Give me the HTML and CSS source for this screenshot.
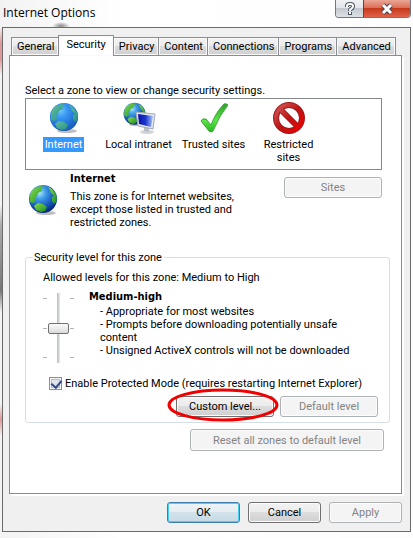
FILE: index.html
```html
<!DOCTYPE html>
<html lang="en">
  <head>
    <meta charset="UTF-8" />
    <meta name="viewport" content="width=device-width, initial-scale=1.0" />
    <title>Internet Options</title>
    <link rel="stylesheet" href="styles.css">
  </head>
  <body>
    <!-- shared globe drawing -->
    <svg class="defs" aria-hidden="true">
      <defs>
        <radialGradient id="sea" cx="38%" cy="28%" r="75%">
          <stop offset="0" stop-color="#a9e4fb" />
          <stop offset="0.3" stop-color="#3f9be8" />
          <stop offset="0.7" stop-color="#1453b8" />
          <stop offset="1" stop-color="#06256f" />
        </radialGradient>
        <linearGradient id="land" x1="0" y1="0" x2="1" y2="1">
          <stop offset="0" stop-color="#8be04c" />
          <stop offset="1" stop-color="#168a24" />
        </linearGradient>
        <linearGradient id="screen" x1="0" y1="0" x2="1" y2="0">
          <stop offset="0" stop-color="#0713a4" />
          <stop offset="0.5" stop-color="#1c35cf" />
          <stop offset="1" stop-color="#a9c3f8" />
        </linearGradient>
        <linearGradient id="tick" x1="0" y1="0" x2="0" y2="1">
          <stop offset="0" stop-color="#2d9f2a" />
          <stop offset="0.6" stop-color="#5be548" />
          <stop offset="1" stop-color="#25b51d" />
        </linearGradient>
        <linearGradient id="stop" gradientUnits="userSpaceOnUse" x1="3" y1="3" x2="29" y2="29">
          <stop offset="0" stop-color="#cf5a5a" />
          <stop offset="0.5" stop-color="#c01414" />
          <stop offset="1" stop-color="#ee0000" />
        </linearGradient>
        <symbol id="globe" viewBox="0 0 32 32">
          <ellipse cx="19" cy="29" rx="10" ry="2" fill="#000" opacity="0.25" />
          <circle cx="16" cy="15" r="14" fill="url(#sea)" />
          <path fill="url(#land)" d="M3 12C4 6 8 3 14 2L17 3L14 5L15 7L11 9L10 12L8 13L9 17L6 19L3 18Z" />
          <path fill="url(#land)" d="M21 3C26 5 29 9 30 14L29 18L27 20L25 17L25 13L27 12L24 9L23 6Z" />
          <path fill="url(#land)" d="M7 22L11 19L16 20L20 23L18 27L14 28L9 26Z" />
        </symbol>
      </defs>
    </svg>

    <!-- title bar -->
    <header class="titlebar">
      <h1>Internet Options</h1>
      <div class="window-buttons">
        <button type="button" class="help" aria-label="Help">
          <svg width="12" height="14" viewBox="0 0 12 14" fill="none">
            <path d="M3 5V4Q3 2 6 2T9 4Q9 6 7 7Q6 7 6 9M6 10V13" stroke="#4d5563" stroke-width="4" />
            <path d="M3 5V4Q3 2 6 2T9 4Q9 6 7 7Q6 7 6 9M6 10V12" stroke="#fff" stroke-width="2" />
          </svg>
        </button>
        <button type="button" class="close" aria-label="Close">
          <svg width="14" height="12" viewBox="0 0 14 12" fill="none">
            <path d="M3 2L11 10M11 2L3 10" stroke="#4b4350" stroke-width="5" />
            <path d="M3 2L11 10M11 2L3 10" stroke="#fff" stroke-width="3" />
          </svg>
        </button>
      </div>
    </header>

    <form class="dialog">
      <div class="tabs" role="tablist">
        <button type="button" role="tab">General</button>
        <button type="button" role="tab" class="active" aria-selected="true">Security</button>
        <button type="button" role="tab">Privacy</button>
        <button type="button" role="tab">Content</button>
        <button type="button" role="tab">Connections</button>
        <button type="button" role="tab">Programs</button>
        <button type="button" role="tab">Advanced</button>
      </div>

      <main class="panel">
        <p class="hint">Select a zone to view or change security settings.</p>
        <ul class="zones">
          <li class="selected">
            <svg width="32" height="32"><use href="#globe" /><circle cx="16" cy="15" r="14" fill="#3399ff" opacity="0.45" /></svg>
            <span>Internet</span>
          </li>
          <li>
            <svg width="34" height="32" viewBox="0 0 34 32">
              <use href="#globe" width="25" height="25" />
              <ellipse cx="25" cy="30" rx="7" ry="2" fill="#d2d5da" />
              <path d="M22 23L27 24L27 30L22 29Z" fill="#b9bdc4" />
              <path d="M14 10L33 12L31 27L16 24Z" fill="#e4e7ec" stroke="#a3a8b2" />
              <path d="M16 12L31 14L29 25L17 22Z" fill="url(#screen)" />
            </svg>
            <span>Local intranet</span>
          </li>
          <li>
            <svg width="32" height="32" viewBox="0 0 32 32">
              <path d="M3 19Q4 16 8 17L13 23Q18 10 26 2Q28 1 30 3Q21 14 15 29Q13 31 11 29Z" fill="url(#tick)" stroke="#38a832" />
            </svg>
            <span>Trusted sites</span>
          </li>
          <li>
            <svg width="32" height="32" viewBox="0 0 32 32" fill="none">
              <circle cx="16" cy="16" r="13" stroke="#a21818" stroke-width="6" />
              <path d="M7 7L25 25" stroke="#a21818" stroke-width="6" />
              <circle cx="16" cy="16" r="13" stroke="url(#stop)" stroke-width="4" />
              <path d="M7 7L25 25" stroke="url(#stop)" stroke-width="4" />
            </svg>
            <span>Restricted sites</span>
          </li>
        </ul>

        <section class="zone-info">
          <svg width="32" height="32"><use href="#globe" /></svg>
          <div class="zone-text">
            <h2>Internet</h2>
            <p>This zone is for Internet websites,<br />except those listed in trusted and<br />restricted zones.</p>
          </div>
          <button type="button" class="btn" disabled>Sites</button>
        </section>

        <fieldset class="level">
          <legend>Security level for this zone</legend>
          <label for="level">Allowed levels for this zone: Medium to High</label>
          <div class="level-body">
            <div class="slider">
              <input type="range" id="level" min="0" max="2" value="1" />
            </div>
            <div>
              <h2>Medium-high</h2>
              <p>- Appropriate for most websites<br />- Prompts before downloading potentially unsafe<br />content<br />- Unsigned ActiveX controls will not be downloaded</p>
            </div>
          </div>
          <div class="protect">
            <input type="checkbox" id="protect" checked />
            <label for="protect">Enable Protected Mode (requires restarting Internet Explorer)</label>
          </div>
          <div class="level-buttons">
            <span class="marked">
              <button type="button" class="btn">Custom level...</button>
              <svg viewBox="0 0 112 34" fill="none"><ellipse cx="56" cy="17" rx="54" ry="15" stroke="#f00000" stroke-width="3" /></svg>
            </span>
            <button type="button" class="btn" disabled>Default level</button>
          </div>
        </fieldset>
        <button type="button" class="btn reset" disabled>Reset all zones to default level</button>
      </main>

      <footer class="actions">
        <button type="submit" class="btn ok">OK</button>
        <button type="button" class="btn">Cancel</button>
        <button type="button" class="btn" disabled>Apply</button>
      </footer>
    </form>
  </body>
</html>
```
FILE: styles.css
```css
* {
  box-sizing: border-box;
  margin: 0;
  padding: 0;
}

body {
  min-height: 100vh;
  padding: 0 2px 6px;
  /* glass frame: colours showing through on the left, a dark smudge under the title */
  background:
    radial-gradient(ellipse 9px 4px at 61px 26px, #888, transparent) no-repeat,
    linear-gradient(transparent 5%, #d99 8%, #d99 11%, transparent 14%, transparent 38%, #aaa 42%, #777 54%, transparent 58%, transparent 75%, #d99 78%, transparent 81%) 0 0 / 2px 100% no-repeat,
    linear-gradient(to right, #f3f3f3, #fff 30%, #fdfdfd);
  font: 11px/13px Roboto, Tahoma, sans-serif;
  color: #000;
}

button,
input {
  font: inherit;
  color: inherit;
}

.defs {
  position: absolute;
  width: 0;
  height: 0;
}

/* title bar */
.titlebar {
  display: flex;
  justify-content: space-between;
  height: 27px;
}

.titlebar h1 {
  padding: 5px 0 0 1px;
  font: 12px/16px "Open Sans", sans-serif;
}

.window-buttons {
  display: flex;
  height: 18px;
  border: 1px solid #6f7785;
  border-top: 0;
  border-radius: 0 0 4px 4px;
  overflow: hidden;
}

.window-buttons button {
  display: flex;
  align-items: center;
  justify-content: center;
  border: 0;
}

.help {
  width: 27px;
  background: linear-gradient(#f1f2f4, #e2e5e9 45%, #c4c9d0 50%, #dde1e6);
}

.window-buttons .close {
  width: 47px;
  border-left: 1px solid #7a3a34;
  background: linear-gradient(#eba697, #dc7059 45%, #c63a1c 50%, #e0614a);
}

/* dialog */
.dialog {
  padding: 7px 8px 8px 6px;
  border: 1px solid #6b6b6b;
  background: #f0f0f0;
}

.tabs {
  display: flex;
  align-items: flex-end;
  padding-left: 2px;
}

.tabs button {
  height: 18px;
  padding: 0 4px 0 5px;
  border: 1px solid #898c95;
  border-bottom: 0;
  margin-right: -1px;
  box-shadow: inset 0 0 0 1px #fafafa;
  background: linear-gradient(#f2f2f2, #ebebeb 50%, #dcdcdc 50%, #d0d0d0);
  white-space: nowrap;
}

.tabs .active {
  position: relative;
  height: 21px;
  padding: 0 7px 3px;
  margin-bottom: -1px;
  background: #fff;
}

.panel {
  padding: 28px 11px 42px 15px;
  border: 1px solid #898c95;
  box-shadow: 2px 2px #fff;
  background: #fff;
}

/* zone list */
.zones {
  display: flex;
  height: 72px;
  margin: 1px 8px 0 0;
  padding-top: 3px;
  border: 1px solid #828790;
  list-style: none;
}

.zones li {
  display: flex;
  flex-direction: column;
  align-items: center;
  gap: 3px;
  width: 75px;
  text-align: center;
}

.zones span {
  padding: 1px 2px;
  white-space: nowrap;
}

.zones li:last-child span {
  width: 60px;
  white-space: normal;
}

.zones .selected span {
  background: #3399ff;
  color: #fff;
}

/* selected zone */
.zone-info {
  display: flex;
  padding: 2px 8px 0 2px;
}

.zone-info svg {
  margin: 12px 11px 0 0;
}

.zone-text {
  flex: 1;
}

h2 {
  font: bold 11px/13px "DejaVu Sans Condensed", Tahoma, sans-serif;
}

.zone-text p {
  margin-top: 5px;
  white-space: nowrap;
}

.btn {
  width: 98px;
  height: 21px;
  border: 1px solid #707070;
  border-radius: 3px;
  box-shadow: inset 0 0 0 1px #fcfcfc;
  background: linear-gradient(#f2f2f2, #ebebeb 50%, #dddddd 50%, #cfcfcf);
}

.btn:disabled {
  border-color: #adb2b5;
  background: #f4f4f4;
  color: #838383;
}

.zone-info .btn {
  margin-top: 5px;
}

/* security level */
.level {
  margin-top: 22px;
  padding: 7px 11px 5px 17px;
  border: 1px solid #d5dfe5;
  border-radius: 3px;
}

.level legend {
  margin-left: -10px;
  padding: 0 2px 0 1px;
}

.level-body {
  display: flex;
  gap: 15px;
  margin-top: 6px;
}

.level-body p {
  margin: 2px 0 0 11px;
  white-space: nowrap;
}

.slider {
  display: flex;
  justify-content: center;
  width: 31px;
  height: 70px;
  margin-top: 3px;
  /* tick marks on both sides */
  background:
    linear-gradient(#b5b5b5, #b5b5b5) 0 5px / 4px 1px no-repeat,
    linear-gradient(#b5b5b5, #b5b5b5) 100% 5px / 4px 1px no-repeat,
    linear-gradient(#b5b5b5, #b5b5b5) 0 35px / 4px 1px no-repeat,
    linear-gradient(#b5b5b5, #b5b5b5) 100% 35px / 4px 1px no-repeat,
    linear-gradient(#b5b5b5, #b5b5b5) 0 64px / 4px 1px no-repeat,
    linear-gradient(#b5b5b5, #b5b5b5) 100% 64px / 4px 1px no-repeat;
}

.slider input {
  appearance: none;
  writing-mode: vertical-lr;
  width: 21px;
  height: 70px;
  background: linear-gradient(to right, #b8bcbc, #e7eaea) center / 3px 100% no-repeat;
}

.slider input::-webkit-slider-thumb {
  appearance: none;
  width: 21px;
  height: 11px;
  border: 1px solid #707070;
  border-radius: 2px;
  background: linear-gradient(#fafafa, #ececec 50%, #dadada);
}

.protect {
  display: flex;
  align-items: center;
  gap: 3px;
  margin: 14px 0 0 6px;
  white-space: nowrap;
}

.protect input {
  appearance: none;
  width: 13px;
  height: 13px;
  border: 1px solid #8e8f8f;
  box-shadow: inset 0 0 0 1px #f4f4f4, inset 0 0 0 2px #b8bfc9;
  background: #dfe4ea;
}

.protect input:checked::after {
  content: "";
  display: block;
  width: 5px;
  height: 8px;
  margin: 0 0 0 3px;
  border: solid #31478f;
  border-width: 0 2px 2px 0;
  transform: rotate(40deg);
}

.level-buttons {
  display: flex;
  justify-content: flex-end;
  gap: 6px;
  margin-top: 6px;
}

.marked {
  position: relative;
}

.marked svg {
  position: absolute;
  top: -8px;
  left: -9px;
  width: 112px;
  height: 34px;
  pointer-events: none;
}

.reset {
  display: block;
  width: 194px;
  height: 22px;
  margin: 6px 6px 0 auto;
}

/* bottom buttons */
.actions {
  display: flex;
  justify-content: flex-end;
  gap: 8px;
  margin-top: 8px;
}

.actions .btn {
  width: 73px;
}

.actions .ok {
  border-color: #3c7fb1;
  box-shadow: inset 0 0 0 1px #48d0f5;
  background: linear-gradient(#eef3f6, #e4edf2 50%, #d3e2ea 50%, #c6dae5);
}
```
